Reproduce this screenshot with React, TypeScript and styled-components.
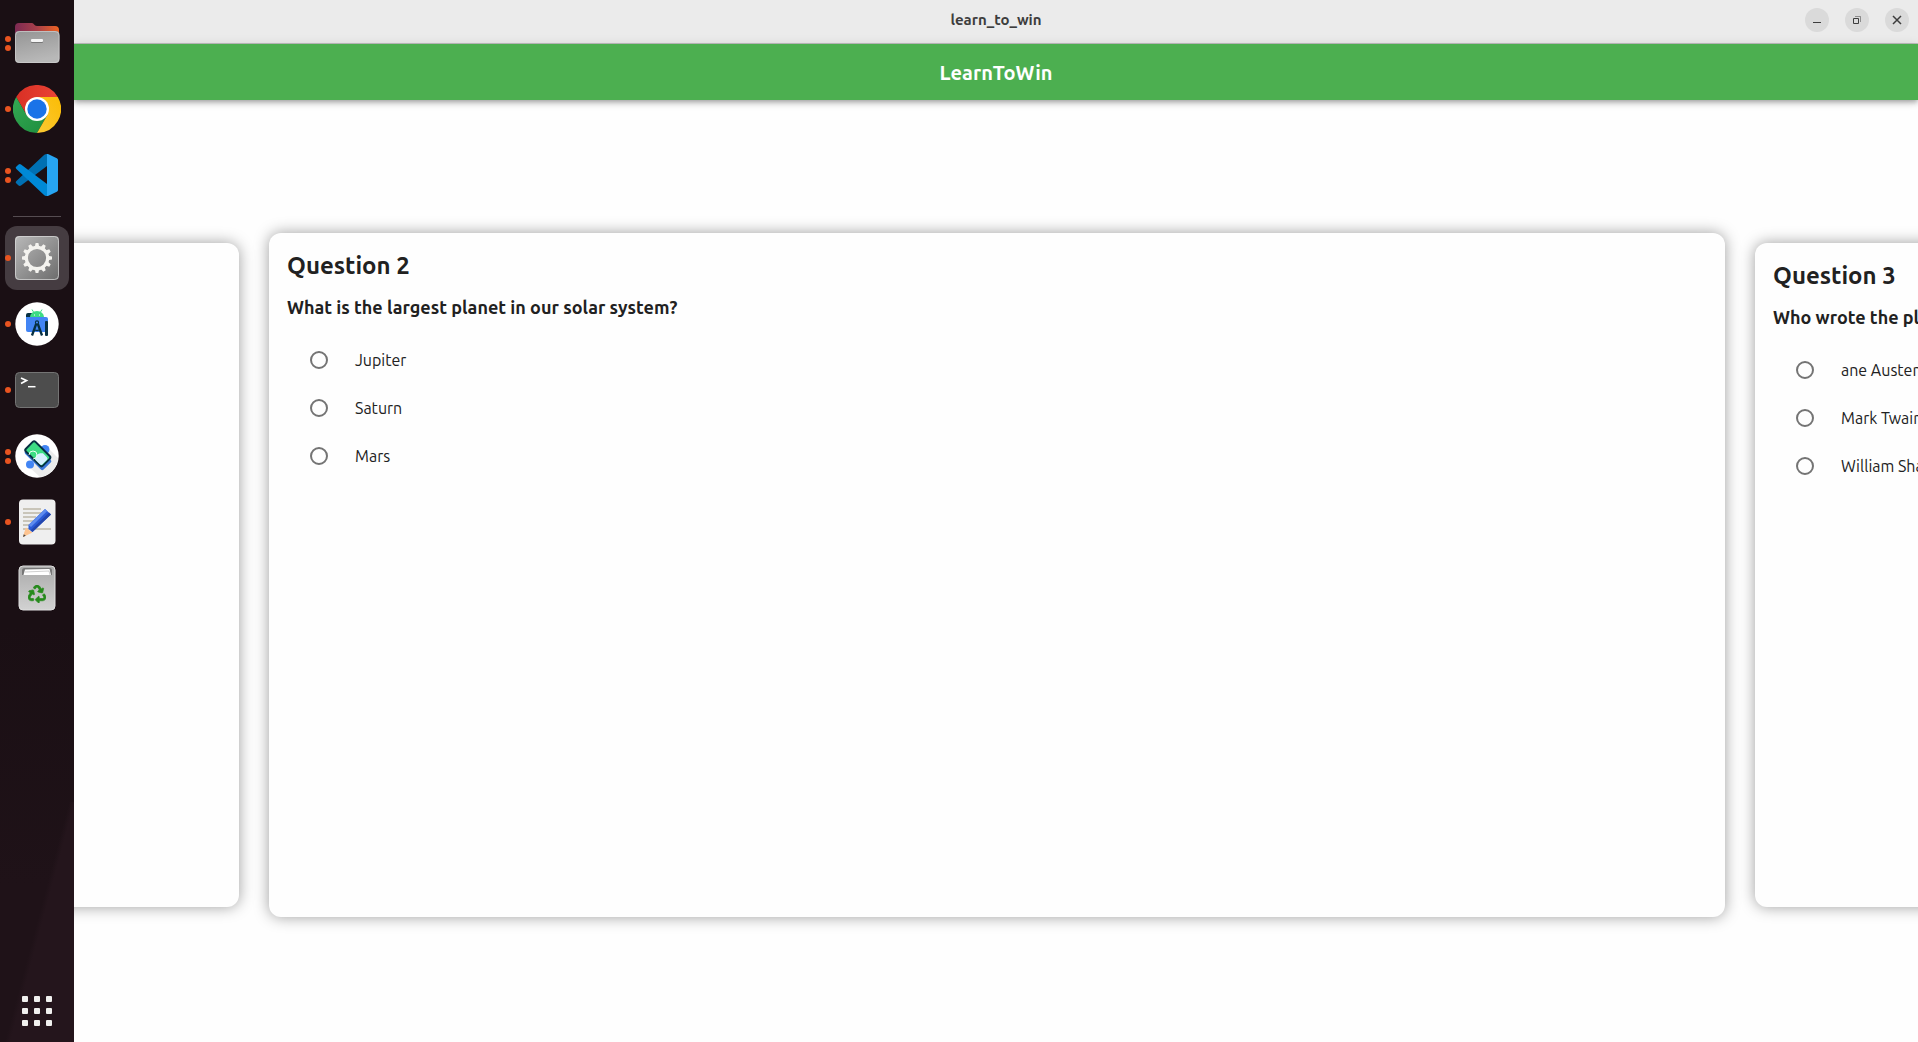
import React from "react";
import styled, { createGlobalStyle } from "styled-components";
import { FaRecycle } from "react-icons/fa";

const GlobalStyle = createGlobalStyle`
  * { box-sizing: border-box; }
  body {
    margin: 0;
    background: #fefefe;
    color: #212121;
    font-family: Ubuntu, "Noto Sans", "Open Sans", sans-serif;
  }
  button { font: inherit; border: 0; padding: 0; cursor: pointer; }
  h1, h2, h3, p { margin: 0; }
`;

const Desktop = styled.div`
  display: flex;
  min-height: 100vh;
  overflow: hidden;
`;

/* ---------- dock ---------- */

const Dock = styled.nav`
  position: relative;
  z-index: 2;
  flex: 0 0 74px;
  display: flex;
  flex-direction: column;
  align-items: center;
  gap: 2px;
  padding-top: 11px;
  background: linear-gradient(105deg, transparent 50%, #24151c 54%) bottom / 100% 240px no-repeat,
    linear-gradient(#1a0f14 60%, #1f1218 85%);
`;

const DockButton = styled.button<{ $active?: boolean }>`
  position: relative;
  flex: none;
  display: grid;
  place-items: center;
  width: 64px;
  height: 64px;
  border-radius: 12px;
  background: ${(p) => (p.$active ? "#453c41" : "transparent")};
`;

const AppsButton = styled(DockButton)`
  height: 62px;
  margin-top: auto;
`;

const Dots = styled.span`
  position: absolute;
  left: 0;
  top: 0;
  height: 100%;
  display: flex;
  flex-direction: column;
  justify-content: center;
  gap: 3px;
`;

const Dot = styled.span`
  width: 6px;
  height: 6px;
  border-radius: 50%;
  background: #e95420;
`;

const DockDivider = styled.hr`
  width: 48px;
  height: 1px;
  margin: 7px 0;
  border: 0;
  background: #554c51;
`;

const Icon = ({ children }: { children: React.ReactNode }) => (
  <svg width="48" height="48" viewBox="0 0 48 48" aria-hidden="true">
    {children}
  </svg>
);

const FilesIcon = () => (
  <Icon>
    <defs>
      <linearGradient id="folderBack">
        <stop offset="0" stopColor="#7d2a53" />
        <stop offset="0.5" stopColor="#a8404a" />
        <stop offset="1" stopColor="#ef6423" />
      </linearGradient>
      <linearGradient id="folderFront" x1="0" y1="0" x2="0.3" y2="1">
        <stop offset="0" stopColor="#949494" />
        <stop offset="1" stopColor="#b8b8b8" />
      </linearGradient>
    </defs>
    <path d="M2 20V8a4 4 0 0 1 4-4h13c2 0 2 3 5 3h18a4 4 0 0 1 4 4v9z" fill="url(#folderBack)" />
    <rect x="2" y="12" width="44.5" height="32" rx="4" fill="url(#folderFront)" />
    <rect x="2.5" y="12.5" width="43.5" height="31" rx="4" fill="none" stroke="#cfcfcf" strokeOpacity="0.7" />
    <rect x="18" y="21" width="12" height="3" rx="1" fill="#777" />
    <rect x="18" y="20" width="12" height="3" rx="1" fill="#f5f5f5" />
  </Icon>
);

const ChromeIcon = () => (
  <Icon>
    <defs>
      <linearGradient id="chromeRed"><stop offset="0" stopColor="#d93025" /><stop offset="1" stopColor="#ea4335" /></linearGradient>
      <linearGradient id="chromeGreen" x1="0" y1="0" x2="1" y2="1"><stop offset="0" stopColor="#34a853" /><stop offset="1" stopColor="#1e8e3e" /></linearGradient>
      <linearGradient id="chromeYellow" x1="0" y1="1" x2="1" y2="0"><stop offset="0" stopColor="#fcc934" /><stop offset="1" stopColor="#fbbc04" /></linearGradient>
    </defs>
    <path d="M44.8 12H24L13.6 30 3.2 12A24 24 0 0 1 44.8 12z" fill="url(#chromeRed)" />
    <path d="M3.2 12 13.6 30H34.4L24 48A24 24 0 0 1 3.2 12z" fill="url(#chromeGreen)" />
    <path d="M44.8 12H24L34.4 30 24 48A24 24 0 0 0 44.8 12z" fill="url(#chromeYellow)" />
    <circle cx="24" cy="24" r="12" fill="#fff" />
    <circle cx="24" cy="24" r="9.7" fill="#1a73e8" />
  </Icon>
);

const CodeIcon = () => (
  <Icon>
    <path d="M34 3v12L8 34.6a2 2 0 0 1-2.4 0L3.4 32.5a1.6 1.6 0 0 1 0-2.5L30.5 4.5C31.5 3.5 32.7 3 34 3z" fill="#0070b3" />
    <path d="M34 45V33L8 13.4a2 2 0 0 0-2.4 0L3.4 15.5a1.6 1.6 0 0 0 0 2.5L30.5 43.5C31.5 44.5 32.7 45 34 45z" fill="#0089d6" />
    <path d="M34 3c.5 0 1 .1 1.5.3l8.3 4A2 2 0 0 1 45 9.100v29.800a2 2 0 0 1-1.200 1.800l-8.300 4c-.5.2-1 .3-1.500.3z" fill="#27a5f2" />
  </Icon>
);

const SettingsIcon = () => (
  <Icon>
    <defs>
      <linearGradient id="settingsBg" x1="0" y1="0" x2="1" y2="1">
        <stop offset="0" stopColor="#b9b9b9" />
        <stop offset="1" stopColor="#6c6c6c" />
      </linearGradient>
    </defs>
    <rect x="2" y="2" width="44" height="44" rx="4" fill="url(#settingsBg)" />
    <rect x="2.5" y="2.5" width="43" height="43" rx="4" fill="none" stroke="#dcdcdc" strokeOpacity="0.7" />
    <g fill="#f4f3ef">
      {Array.from({ length: 12 }, (_, i) => (
        <path key={i} d="M21.8 13 22.6 9h2.8l.8 4z" transform={`rotate(${i * 30} 24 24)`} />
      ))}
    </g>
    <circle cx="24" cy="24" r="10.7" fill="none" stroke="#f4f3ef" strokeWidth="3.2" />
  </Icon>
);

const StudioIcon = () => (
  <Icon>
    <circle cx="24" cy="24" r="21.7" fill="#fff" />
    <path d="M13 18v-3a2 2 0 0 1 2-2h4v5z" fill="#073042" />
    <path d="M13 17h20a2 2 0 0 1 2 2v13H15a2 2 0 0 1-2-2z" fill="#4285f4" />
    <path d="M17 17a7 6 0 0 1 14 0z" fill="#3ddc84" />
    <path d="M20.5 12 19 9.5M27.5 12 29 9.5" stroke="#3ddc84" />
    <path d="M21 15h1M26 15h1" stroke="#fff" />
    <rect x="32" y="21" width="3" height="15" rx="1" fill="#073042" />
    <path d="M23.3 23.5 19 35.5M24.7 23.5 29 35.5" stroke="#073042" strokeWidth="2.3" />
    <path d="M21 29.5q3 2 6 0" stroke="#073042" strokeWidth="1.3" fill="none" />
    <circle cx="24" cy="22.5" r="1.6" fill="#4285f4" stroke="#073042" strokeWidth="1.1" />
  </Icon>
);

const TerminalIcon = () => (
  <Icon>
    <rect x="2.5" y="6.5" width="43" height="35" rx="4" fill="#4d4d4d" stroke="#747474" />
    <path d="m8 12 5.500 2.600L8 17.500" fill="none" stroke="#fff" strokeWidth="1.7" />
    <path d="M15 20.700h7.500" stroke="#fff" strokeWidth="1.5" />
  </Icon>
);

const EmulatorIcon = () => (
  <Icon>
    <circle cx="24" cy="24" r="21.7" fill="#fff" />
    <path d="m37 18 8 8a21 21 0 0 1-18 19L16 35z" fill="#ececec" />
    <circle cx="32" cy="17.5" r="4.5" fill="#4285f4" />
    <circle cx="17" cy="32.5" r="4" fill="#4285f4" />
    <g transform="rotate(45 25 22)">
      <rect x="14" y="17" width="26" height="14" rx="2" fill="#3b78d8" />
      <rect x="12.7" y="15.2" width="24" height="13.6" rx="2" fill="#3ddc84" stroke="#073042" strokeWidth="2" />
      <path d="M27 28a6 6 0 0 1-1-8l2-2h5.500a2 2 0 0 1 2 2v6a2 2 0 0 1-2 2z" fill="#d7effe" />
    </g>
    <path d="M16 23a4 4 0 1 1 4 4" fill="none" stroke="#e9fff2" />
  </Icon>
);

const EditorIcon = () => (
  <Icon>
    <rect x="6" y="1.5" width="36.5" height="45" rx="4" fill="#efefef" />
    <path d="M10 11h18M10 15h22M10 19h13M10 23h16M10 27h10M10 31h28" stroke="#c9c5b9" strokeWidth="1.8" />
    <path d="m10 39 3-9.500L17.500 34z" fill="#fdc491" />
    <path d="m13 30 6.500 4.500L10 39z" fill="#fdc491" />
    <path d="m10 39 .8-2.800 2 1.500z" fill="#444" />
    <path d="M15.500 27 32 11l6 5.500-18.500 17.500-4-3z" fill="#2b5bd7" />
    <path d="M15.500 27 32 11l2.200 2L18 29z" fill="#5e8bee" />
    <path d="m19.500 34 18.500-17.500-2-1.900-18.500 17.900z" fill="#2346ad" />
  </Icon>
);

const TrashIcon = () => (
  <Icon>
    <defs>
      <linearGradient id="trashBg" x2="0" y2="1"><stop offset="0" stopColor="#aaa" /><stop offset="1" stopColor="#d2d2d2" /></linearGradient>
    </defs>
    <rect x="6" y="2" width="36" height="44" rx="4" fill="url(#trashBg)" stroke="#dedede" />
    <path d="M9 11V6.500A2.500 2.500 0 0 1 11.500 4h25A2.500 2.500 0 0 1 39 6.500V11z" fill="#777" />
    <path d="M10.500 11 12 5.500l24.500-.5 1.500 6z" fill="#fff" />
    <path d="m12 8 24-1 1 4" fill="none" stroke="#bbb" strokeWidth="0.7" />
    <FaRecycle x="15" y="21" size={18} color="#268a1c" stroke="#268a1c" strokeWidth={20} strokeLinejoin="round" />
  </Icon>
);

const AppsIcon = () => (
  <svg width="30" height="30" viewBox="0 0 30 30" fill="#f0f0ee" aria-hidden="true">
    {[0, 12, 24].map((y) => [0, 12, 24].map((x) => <rect key={`${x}-${y}`} x={x} y={y} width="6" height="6" rx="1" />))}
  </svg>
);

type DockApp = { name: string; windows: number; icon: React.FC; active?: boolean };

const pinned: DockApp[] = [
  { name: "Files", windows: 2, icon: FilesIcon },
  { name: "Google Chrome", windows: 1, icon: ChromeIcon },
  { name: "Visual Studio Code", windows: 2, icon: CodeIcon },
];

const running: DockApp[] = [
  { name: "learn_to_win", windows: 1, icon: SettingsIcon, active: true },
  { name: "Android Studio", windows: 1, icon: StudioIcon },
  { name: "Terminal", windows: 1, icon: TerminalIcon },
  { name: "Android Emulator", windows: 2, icon: EmulatorIcon },
  { name: "Text Editor", windows: 1, icon: EditorIcon },
  { name: "Trash", windows: 0, icon: TrashIcon },
];

const DockEntry = ({ app }: { app: DockApp }) => (
  <DockButton type="button" aria-label={app.name} $active={app.active}>
    <Dots>
      {Array.from({ length: app.windows }, (_, i) => (
        <Dot key={i} />
      ))}
    </Dots>
    <app.icon />
  </DockButton>
);

/* ---------- window ---------- */

const Window = styled.div`
  flex: 1;
  min-width: 0;
  display: flex;
  flex-direction: column;
`;

const TitleBar = styled.header`
  display: grid;
  grid-template-columns: 1fr auto 1fr;
  align-items: start;
  height: 44px;
  padding: 8px 9px 0;
  background: #ebebeb;
  border-bottom: 1px solid #bfbfbf;
`;

const WindowTitle = styled.p`
  grid-column: 2;
  font-size: 15px;
  line-height: 24px;
  font-weight: 700;
  color: #3d3d3d;
`;

const Controls = styled.div`
  display: flex;
  justify-content: flex-end;
  gap: 16px;
`;

const ControlButton = styled.button`
  display: grid;
  place-items: center;
  width: 24px;
  height: 24px;
  border-radius: 50%;
  background: #dadada;
  color: #3d3d3d;
`;

const AppBar = styled.div`
  z-index: 1;
  display: flex;
  align-items: center;
  justify-content: center;
  height: 56px;
  padding-top: 2px;
  background: #4caf50;
  box-shadow: 0 2px 4px -1px rgba(0, 0, 0, 0.2), 0 4px 5px rgba(0, 0, 0, 0.14), 0 1px 10px rgba(0, 0, 0, 0.12);
`;

const AppTitle = styled.h1`
  font-size: 20px;
  line-height: 28px;
  font-weight: 700;
  color: #fff;
`;

const Carousel = styled.main`
  flex: 1;
  display: grid;
  grid-template-columns: 165px minmax(0, 1fr) 163px;
  column-gap: 30px;
  padding: 133px 0 125px;
  overflow: hidden;
`;

const Card = styled.section<{ $place: "before" | "current" | "after" }>`
  width: ${(p) => (p.$place === "current" ? "100%" : "76vw")};
  justify-self: ${(p) => (p.$place === "before" ? "end" : "start")};
  margin: ${(p) => (p.$place === "current" ? "0" : "10px 0")};
  padding: 18px;
  border-radius: 12px;
  background: #fefefe;
  box-shadow: 0 0 15px rgba(0, 0, 0, 0.38);
`;

const CardTitle = styled.h2`
  font-size: 24px;
  line-height: 30px;
  font-weight: 700;
`;

const Prompt = styled.h3`
  margin-top: 12px;
  font-size: 18px;
  line-height: 28px;
  font-weight: 700;
`;

const Options = styled.div`
  margin-top: 15px;
  padding-left: 23px;
`;

const Option = styled.label`
  display: flex;
  align-items: center;
  gap: 27px;
  height: 48px;
  font-size: 16px;
  white-space: nowrap;
`;

const Radio = styled.input`
  appearance: none;
  flex: none;
  width: 18px;
  height: 18px;
  margin: 0;
  border: 2px solid #747474;
  border-radius: 50%;
  &:checked {
    border-color: #4caf50;
    background: radial-gradient(#4caf50 45%, transparent 50%);
  }
`;

type Question = { number: number; prompt: string; options: string[] };

const second: Question = {
  number: 2,
  prompt: "What is the largest planet in our solar system?",
  options: ["Jupiter", "Saturn", "Mars"],
};

const third: Question = {
  number: 3,
  prompt: "Who wrote the play",
  options: ["ane Austen", "Mark Twain", "William Shakespeare"],
};

const QuestionCard = ({ question, place }: { question: Question; place: "current" | "after" }) => (
  <Card $place={place} aria-label={`Question ${question.number}`}>
    <CardTitle>Question {question.number}</CardTitle>
    <Prompt>{question.prompt}</Prompt>
    <Options role="radiogroup" aria-label={question.prompt}>
      {question.options.map((option) => (
        <Option key={option}>
          <Radio type="radio" name={`question-${question.number}`} value={option} />
          {option}
        </Option>
      ))}
    </Options>
  </Card>
);

export default function App() {
  return (
    <>
      <GlobalStyle />
      <Desktop>
        <Dock aria-label="Dock">
          {pinned.map((app) => (
            <DockEntry key={app.name} app={app} />
          ))}
          <DockDivider />
          {running.map((app) => (
            <DockEntry key={app.name} app={app} />
          ))}
          <AppsButton type="button" aria-label="Show applications">
            <AppsIcon />
          </AppsButton>
        </Dock>
        <Window>
          <TitleBar>
            <WindowTitle>learn_to_win</WindowTitle>
            <Controls>
              <ControlButton type="button" aria-label="Minimize">
                <svg width="16" height="16" fill="none" stroke="currentColor">
                  <path d="M4 10.5h8" />
                </svg>
              </ControlButton>
              <ControlButton type="button" aria-label="Restore">
                <svg width="16" height="16" fill="none" stroke="currentColor">
                  <path d="M4.5 6.5h5v5h-5z" />
                  <path d="M6 4.5h5.500V10" strokeOpacity="0.5" />
                </svg>
              </ControlButton>
              <ControlButton type="button" aria-label="Close">
                <svg width="16" height="16" fill="none" stroke="currentColor" strokeWidth="1.5">
                  <path d="m4 4 8 8M12 4l-8 8" />
                </svg>
              </ControlButton>
            </Controls>
          </TitleBar>
          <AppBar>
            <AppTitle>LearnToWin</AppTitle>
          </AppBar>
          <Carousel>
            <Card $place="before" aria-label="Question 1" />
            <QuestionCard question={second} place="current" />
            <QuestionCard question={third} place="after" />
          </Carousel>
        </Window>
      </Desktop>
    </>
  );
}
